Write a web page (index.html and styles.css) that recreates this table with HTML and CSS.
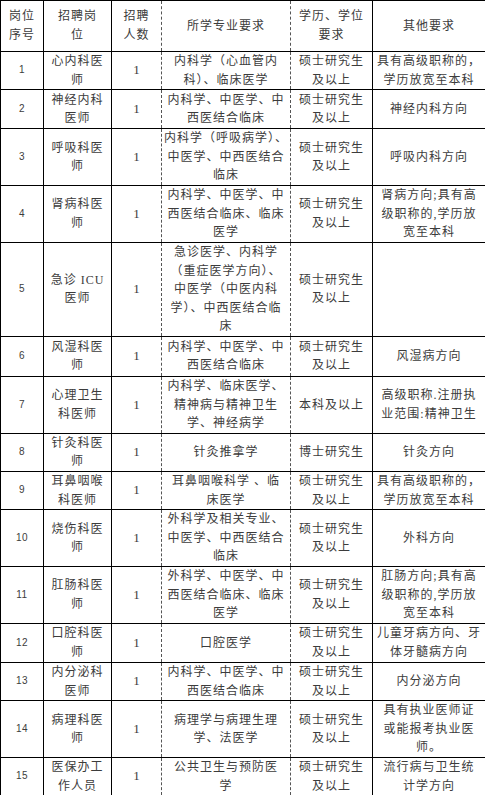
FILE: index.html
```html
<!DOCTYPE html>
<html lang="zh">
<head>
<meta charset="utf-8">
<title>招聘岗位表</title>
<link rel="stylesheet" href="styles.css">
</head>
<body>
<table class="grid">
  <colgroup>
    <col class="c1"><col class="c2"><col class="c3"><col class="c4"><col class="c5"><col class="c6">
  </colgroup>
  <tbody>
    <tr class="h51">
      <td>岗位<br>序号</td>
      <td>招聘岗<br>位</td>
      <td class="dr">招聘<br>人数</td>
      <td class="dl dr">所学专业要求</td>
      <td class="dl">学历、学位<br>要求</td>
      <td>其他要求</td>
    </tr>
    <tr class="h38 db">
      <td class="no">1</td>
      <td>心内科医<br>师</td>
      <td class="num dr">1</td>
      <td class="dl dr">内科学（心血管内<br>科）、临床医学</td>
      <td class="dl">硕士研究生<br>及以上</td>
      <td>具有高级职称的，<br>学历放宽至本科</td>
    </tr>
    <tr class="h39">
      <td class="no">2</td>
      <td>神经内科<br>医师</td>
      <td class="num dr">1</td>
      <td class="dl dr">内科学、中医学、中<br>西医结合临床</td>
      <td class="dl">硕士研究生<br>及以上</td>
      <td>神经内科方向</td>
    </tr>
    <tr class="h57">
      <td class="no">3</td>
      <td>呼吸科医<br>师</td>
      <td class="num dr">1</td>
      <td class="dl dr">内科学（呼吸病学）、<br>中医学、中西医结合<br>临床</td>
      <td class="dl">硕士研究生<br>及以上</td>
      <td>呼吸内科方向</td>
    </tr>
    <tr class="h56">
      <td class="no">4</td>
      <td>肾病科医<br>师</td>
      <td class="num dr">1</td>
      <td class="dl dr">内科学、中医学、中<br>西医结合临床、临床<br>医学</td>
      <td class="dl">硕士研究生<br>及以上</td>
      <td>肾病方向;具有高<br>级职称的,学历放<br>宽至本科</td>
    </tr>
    <tr class="h94">
      <td class="no">5</td>
      <td>急诊 ICU<br>医师</td>
      <td class="num dr">1</td>
      <td class="dl dr">急诊医学、内科学<br>（重症医学方向）、<br>中医学（中医内科<br>学）、中西医结合临<br>床</td>
      <td class="dl">硕士研究生<br>及以上</td>
      <td></td>
    </tr>
    <tr class="h40">
      <td class="no">6</td>
      <td>风湿科医<br>师</td>
      <td class="num dr">1</td>
      <td class="dl dr">内科学、中医学、中<br>西医结合临床</td>
      <td class="dl">硕士研究生<br>及以上</td>
      <td>风湿病方向</td>
    </tr>
    <tr class="h56">
      <td class="no">7</td>
      <td>心理卫生<br>科医师</td>
      <td class="num dr">1</td>
      <td class="dl dr">内科学、临床医学、<br>精神病与精神卫生<br>学、神经病学</td>
      <td class="dl">本科及以上</td>
      <td>高级职称.注册执<br>业范围:精神卫生</td>
    </tr>
    <tr class="h38">
      <td class="no">8</td>
      <td>针灸科医<br>师</td>
      <td class="num dr">1</td>
      <td class="dl dr">针灸推拿学</td>
      <td class="dl">博士研究生</td>
      <td>针灸方向</td>
    </tr>
    <tr class="h38 db">
      <td class="no">9</td>
      <td>耳鼻咽喉<br>科医师</td>
      <td class="num dr">1</td>
      <td class="dl dr">耳鼻咽喉科学 、临<br>床医学</td>
      <td class="dl">硕士研究生<br>及以上</td>
      <td>具有高级职称的，<br>学历放宽至本科</td>
    </tr>
    <tr class="h57">
      <td class="no">10</td>
      <td>烧伤科医<br>师</td>
      <td class="num dr">1</td>
      <td class="dl dr">外科学及相关专业、<br>中医学、中西医结合<br>临床</td>
      <td class="dl">硕士研究生<br>及以上</td>
      <td>外科方向</td>
    </tr>
    <tr class="h56">
      <td class="no">11</td>
      <td>肛肠科医<br>师</td>
      <td class="num dr">1</td>
      <td class="dl dr">外科学、中医学、中<br>西医结合临床、临床<br>医学</td>
      <td class="dl">硕士研究生<br>及以上</td>
      <td>肛肠方向;具有高<br>级职称的,学历放<br>宽至本科</td>
    </tr>
    <tr class="h39 db">
      <td class="no">12</td>
      <td>口腔科医<br>师</td>
      <td class="num dr">1</td>
      <td class="dl dr">口腔医学</td>
      <td class="dl">硕士研究生<br>及以上</td>
      <td>儿童牙病方向、牙<br>体牙髓病方向</td>
    </tr>
    <tr class="h38 db">
      <td class="no">13</td>
      <td>内分泌科<br>医师</td>
      <td class="num dr">1</td>
      <td class="dl dr">内科学、中医学、中<br>西医结合临床</td>
      <td class="dl">硕士研究生<br>及以上</td>
      <td>内分泌方向</td>
    </tr>
    <tr class="h57">
      <td class="no">14</td>
      <td>病理科医<br>师</td>
      <td class="num dr">1</td>
      <td class="dl dr">病理学与病理生理<br>学、法医学</td>
      <td class="dl">硕士研究生<br>及以上</td>
      <td>具有执业医师证<br>或能报考执业医<br>师。</td>
    </tr>
    <tr class="h38">
      <td class="no">15</td>
      <td>医保办工<br>作人员</td>
      <td class="num dr">1</td>
      <td class="dl dr">公共卫生与预防医<br>学</td>
      <td class="dl">硕士研究生<br>及以上</td>
      <td>流行病与卫生统<br>计学方向</td>
    </tr>
  </tbody>
</table>
</body>
</html>
```

FILE: styles.css
```css
html, body {
  margin: 0;
  padding: 0;
  background: #ffffff;
}

.grid {
  border-collapse: collapse;
  table-layout: fixed;
  width: 485px;
  font-family: "Liberation Serif", "Noto Sans CJK SC", serif;
  font-size: 12px;
  letter-spacing: 1px;
  line-height: 18.6px;
  color: #3c3c3c;
}

.c1 { width: 43px; }
.c2 { width: 68px; }
.c3 { width: 50px; }
.c4 { width: 129px; }
.c5 { width: 82px; }
.c6 { width: 113px; }

.grid td {
  border: 1px solid #000000;
  padding: 0;
  text-align: center;
  vertical-align: middle;
  white-space: nowrap;
  overflow: hidden;
}

.grid td.dl { border-left: 1px dashed #555555; }
.grid td.dr { border-right: 1px dashed #555555; }
.grid tr.db td { border-bottom: 1px dashed #555555; }

.grid td.no {
  font-family: "Liberation Sans", sans-serif;
  font-size: 10px;
  letter-spacing: 0.5px;
}

.grid td.num {
  font-family: "Liberation Serif", serif;
  font-size: 13px;
  letter-spacing: 0;
}

.h38 { height: 38px; }
.h39 { height: 39px; }
.h40 { height: 40px; }
.h51 { height: 51px; }
.h56 { height: 56px; }
.h57 { height: 57px; }
.h58 { height: 58px; }
.h94 { height: 94px; }
```
